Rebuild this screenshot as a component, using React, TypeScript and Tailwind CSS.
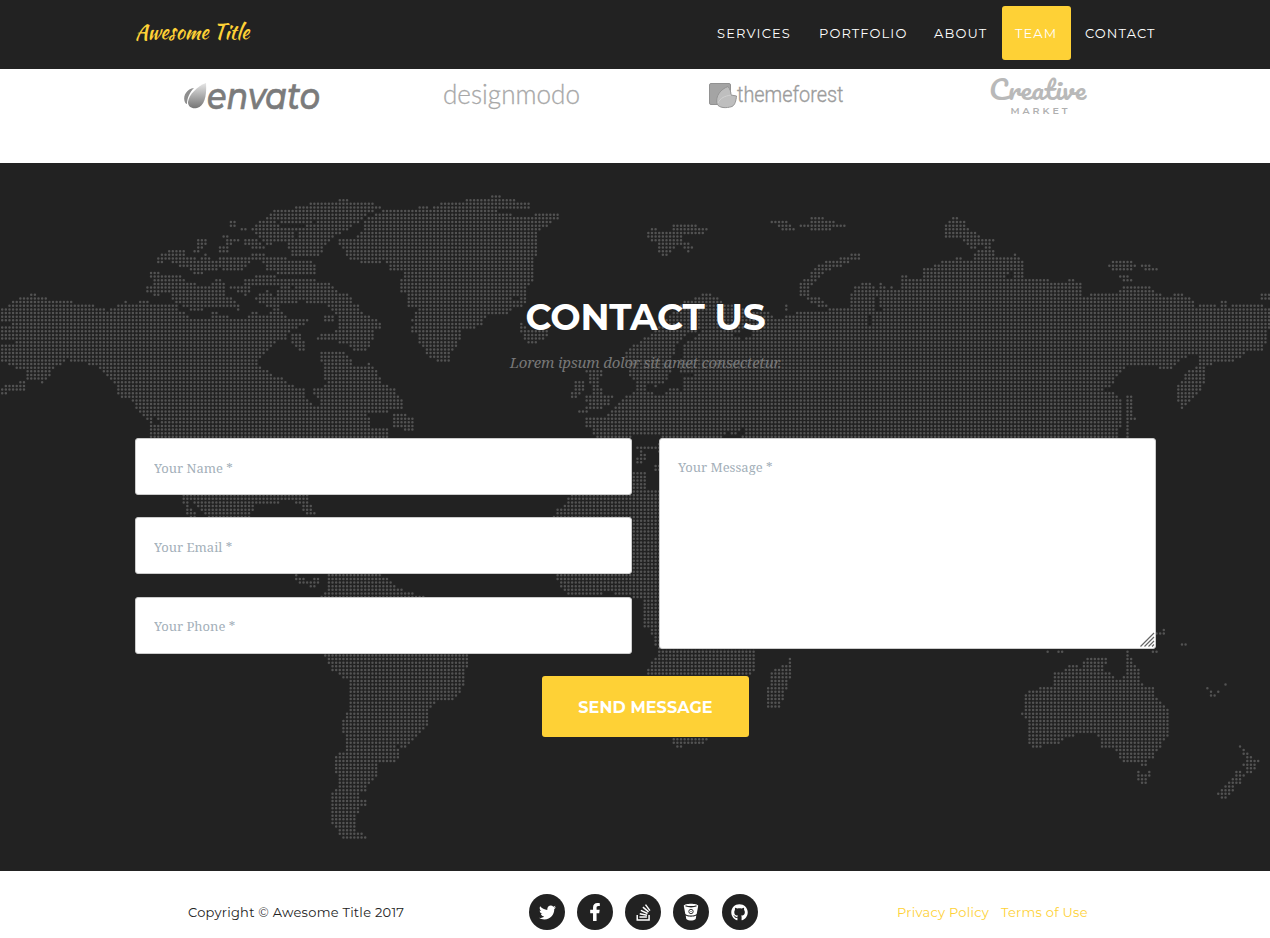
import React from "react";
import { FaTwitter, FaFacebookF, FaStackOverflow, FaGithub } from "react-icons/fa";

type Point = [number, number];
// Outlines are stored in thirds of a pixel, relative to the origin of their map sheet.
type Sheet = { x: number; y: number; outlines: string[] };

const NORTH_AMERICA: Sheet = {
  x: 0,
  y: 180,
  outlines: [
    "0,382 25,382 30,370 55,360 60,350 90,350 95,339 107,339 110,350 140,352 145,362 215,362 220,372 280,374 300,384 325,390 345,378 375,366 400,370 430,362 450,366 500,374 530,376 540,394 560,396 570,412 630,414 640,392 655,392 660,404 680,404 700,414 740,412 750,395 770,395 780,410 800,404 805,390 825,390 850,394 860,410 900,418 925,418 920,432 880,446 865,456 865,475 875,480 830,486 815,500 790,520 778,540 780,560 800,572 815,585 845,595 870,612 900,622 918,630 920,660 945,680 965,670 960,655 940,645 940,625 975,615 980,600 970,590 968,560 962,535 965,508 1020,510 1050,530 1060,555 1080,565 1110,548 1130,570 1145,605 1180,625 1205,655 1215,690 1190,692 1100,702 1115,715 1115,745 1160,745 1165,760 1180,790 455,790 450,740 440,715 415,700 405,670 385,655 350,610 330,605 315,580 290,560 250,546 220,545 205,538 180,555 150,570 150,585 130,610 110,595 80,605 75,630 45,632 10,644 0,644 0,622 40,612 70,600 80,590 85,575 50,570 20,550 0,540 0,495 50,490 45,478 0,480 0,440 40,440 35,428 0,426",
    "350,615 360,615 375,635 380,662 370,655 352,640",
    "1180,700 1210,693 1228,710 1245,720 1247,754 1225,755 1200,740 1180,738",
    "830,297 940,297 960,310 985,308 1010,330 1045,345 1060,365 1080,375 1085,400 1120,415 1145,430 1147,442 1120,446 1125,465 1112,500 1090,514 1060,512 1060,500 1030,495 1010,480 952,480 955,462 1005,460 1010,440 1010,410 995,385 975,375 930,375 915,360 870,372 835,365 830,340 835,320",
    "975,403 1000,403 1000,427 975,427",
    "870,462 910,462 905,485 920,488 920,514 900,514 875,495",
    "450,276 490,280 545,290 560,305 590,312 625,318 645,300 665,300 680,310 678,345 700,360 720,375 720,392 690,384 640,385 570,392 550,378 525,370 515,350 495,335 470,347 438,337 440,318 465,310 452,292",
    "685,316 720,322 740,290 758,290 760,300 755,340 735,345 710,335 690,330",
    "768,288 832,288 828,315 768,320",
    "768,345 800,330 825,350 842,370 840,390 820,392 790,375 768,365",
    "472,238 482,220 500,212 555,208 560,228 600,238 620,220 640,240 668,245 665,265 640,275 580,284 560,265 540,262 510,243 472,248",
    "588,178 624,178 620,195 605,218 582,216 582,205 594,198",
    "690,122 712,122 712,138 690,138",
    "722,144 744,144 744,153 722,153",
    "668,168 720,172 720,190 695,192 680,218 658,218 660,198 680,194",
    "732,180 756,168 780,190 797,195 797,208 785,212 760,208 735,195",
    "658,230 752,230 755,248 720,272 668,272",
    "755,218 800,225 810,233 925,238 948,250 948,282 850,284 800,272 800,248 755,242",
    "765,135 785,120 800,112 815,92 880,84 930,70 1010,66 1020,56 1048,56 1052,66 1110,68 1147,82 1142,90 1105,96 1090,120 1060,135 1020,165 990,175 980,195 965,215 955,235 870,232 865,200 830,188 810,200 780,175 755,150",
  ],
};

const GREENLAND: Sheet = {
  x: 320,
  y: 180,
  outlines: [
    "57,180 100,175 130,150 130,120 180,98 200,88 270,88 300,80 322,80 330,94 345,76 360,68 430,64 440,56 510,56 518,45 548,45 550,56 580,58 600,68 632,68 632,86 600,88 530,92 540,100 630,110 650,100 722,100 722,118 690,130 655,155 648,185 658,215 640,235 645,280 635,305 615,320 622,355 610,380 580,385 560,406 500,405 490,430 460,448 430,450 415,490 395,515 388,545 365,545 340,540 320,520 300,495 290,465 268,450 285,435 268,425 285,400 300,385 265,380 265,350 255,338 243,335 245,275 210,270 200,245 130,250 95,240 80,228 80,215 60,208",
    "600,430 612,430 620,445 640,448 690,455 688,472 660,480 640,492 620,485 605,460 595,445",
    "768,493 778,493 778,512 768,512",
    "792,572 850,570 845,590 835,600 840,620 855,645 878,650 870,670 850,685 800,695 772,698 772,690 800,680 800,665 790,655 820,640 820,620 800,612 805,590",
    "757,600 795,600 790,635 770,655 745,657 750,635 760,625",
  ],
};

const EURASIA: Sheet = {
  x: 620,
  y: 180,
  outlines: [
    "-108,712 -50,712 -30,700 0,665 20,650 42,638 45,600 20,580 20,545 10,525 25,505 60,485 90,465 120,440 190,365 230,352 260,338 268,338 275,352 300,352 305,365 350,375 420,395 450,394 470,415 485,420 510,400 610,393 640,380 690,385 688,345 710,315 735,307 755,308 765,320 762,370 768,395 785,390 770,345 772,310 785,310 800,328 820,318 840,335 840,288 860,288 875,298 905,295 905,265 935,263 945,254 975,242 1010,233 1060,240 1065,215 1090,205 1110,190 1060,205 1045,200 1030,178 975,172 973,140 985,122 1005,112 1015,112 1035,122 1040,142 1065,155 1075,168 1122,178 1112,205 1135,230 1180,225 1188,222 1210,240 1208,293 1260,298 1310,304 1365,298 1385,310 1390,345 1410,350 1415,330 1430,338 1490,338 1510,320 1592,318 1605,335 1640,350 1675,340 1715,353 1722,365 1720,385 1740,374 1795,378 1802,365 1820,362 1830,385 1840,366 1920,374 1955,384 1955,430 1942,465 1932,514 1880,516 1840,547 1790,545 1760,560 1756,610 1730,645 1700,675 1685,688 1672,665 1670,620 1700,580 1730,555 1730,530 1700,528 1660,565 1625,568 1610,555 1520,562 1485,595 1480,612 1455,630 1490,640 1508,660 1505,730 1485,800 -60,800 -85,750 -105,735",
    "1520,640 1538,640 1538,690 1548,715 1527,722 1525,800 1517,800 1518,690 1512,650",
    "1922,340 1960,340 1960,360 1922,360",
    "75,155 90,145 110,148 150,150 155,132 225,132 230,145 270,145 270,152 248,163 195,165 190,180 228,198 212,218 190,205 165,190 160,215 145,229 130,228 110,218 108,185 90,182",
    "445,122 500,122 525,150 497,153 470,138",
    "535,132 570,125 575,112 608,112 612,122 640,122 678,136 675,143 610,152 570,152 565,140 535,140",
    "533,315 545,297 570,290 580,262 610,245 690,228 690,220 720,220 720,240 690,247 650,262 620,275 590,300 565,325 565,345 600,350 605,362 625,372 610,385 560,360 533,338",
    "488,372 500,375 514,385 490,395",
    "1465,255 1475,243 1538,243 1546,260 1538,273 1480,273",
    "1560,254 1592,254 1615,265 1612,272 1575,270",
    "1498,286 1528,286 1538,304 1510,304",
  ],
};

const AFRICA: Sheet = {
  x: 500,
  y: 430,
  outlines: [
    "400,20 478,20 478,72 455,55 432,60 437,90 425,100 400,102 418,75 410,50 400,35",
    "458,102 480,102 480,124 458,124",
    "155,262 175,235 190,225 212,195 396,195 396,126 442,130 442,178 600,180 700,300 768,657 772,715 745,740 690,880 632,925 608,943 550,945 540,953 525,950 515,925 460,745 445,735 445,715 460,690 475,680 468,650 458,640 455,605 425,585 425,510 396,500 205,495 175,460 160,430",
    "862,682 872,682 872,745 850,800 845,834 797,834 797,780 808,765 808,730 830,715 860,700",
  ],
};

const SOUTH_AMERICA: Sheet = {
  x: 130,
  y: 480,
  outlines: [
    "150,30 540,30 540,75 562,100 562,110 545,110 518,95 512,70 450,63 440,72 375,72 360,120 235,120 200,80 190,60 175,65 190,95 212,120 190,120 170,105 168,75 155,66",
    "483,280 515,290 530,305 550,303 550,290 572,292 572,310 560,322 540,320 510,310",
    "595,280 640,280 745,280 780,300 800,325 845,338 885,352 1000,400 1019,525 1010,570 1005,600 988,645 965,662 920,665 900,690 898,725 880,755 830,803 812,803 800,795 812,825 790,848 748,852 745,878 735,900 712,912 712,938 690,938 695,958 714,958 714,978 690,980 685,1000 672,1010 684,1055 714,1067 714,1078 640,1078 618,1050 605,1030 605,938 620,928 617,825 640,815 650,770 640,765 638,725 650,700 662,670 660,605 605,572 595,545 570,520 500,440 570,350 590,330",
  ],
};

const OCEANIA: Sheet = {
  x: 980,
  y: 600,
  outlines: [
    "132,283 155,270 190,258 218,256 218,216 245,215 265,193 285,193 300,205 315,172 383,172 372,210 400,228 415,237 430,228 438,210 438,150 447,150 450,168 460,190 480,205 482,235 495,260 522,265 525,285 545,305 558,320 568,337 567,400 545,432 530,460 523,477 502,480 502,498 484,498 480,480 470,488 440,488 418,477 405,450 385,442 360,442 362,415 340,400 280,400 280,410 250,412 240,434 185,434 182,442 155,442 143,430 145,365 132,355 122,345 122,338 133,335",
    "470,510 482,520 502,522 505,510 514,510 512,530 500,552 484,552 470,540",
    "776,433 795,445 805,462 838,480 838,486 820,518 798,518 800,500 787,493 798,480 788,462",
    "765,510 785,510 797,524 785,545 765,560 760,575 740,597 722,595 710,580 735,555 750,540 768,530",
  ],
};

const WATER: Sheet[] = [
  {
    x: 0,
    y: 180,
    outlines: [
      "818,112 845,128 918,132 918,143 845,144",
      "880,152 896,160 896,176 880,172",
      "600,212 612,212 612,232 600,228",
      "870,317 886,317 886,328 870,328",
      "820,190 860,190 858,216 830,214",
      "938,120 952,120 952,131 938,131",
      "455,708 470,708 482,730 460,730",
    ],
  },
  {
    x: 620,
    y: 180,
    outlines: [
      "165,492 205,463 240,452 235,465 200,485 185,500 188,525 180,545 180,575 225,585 225,590 190,592 185,630 150,625 130,643 85,638 75,615 110,618 140,605 155,570 160,530",
      "340,455 400,452 395,466 365,478 340,466",
      "296,800 305,765 330,758 335,770 350,765 370,745 372,760 350,800",
      "35,800 35,768 120,768 115,800",
      "1165,275 1185,280 1175,295 1160,292",
      "740,425 755,395 760,440 745,440",
    ],
  },
  { x: 320, y: 180, outlines: ["582,345 603,345 603,360 582,362"] },
  { x: 500, y: 430, outlines: ["310,488 340,488 335,497 315,497"] },
];

const ISLETS: Point[] = [
  [1046.7, 651.7], [1058, 651.7], [1062, 651.7], [1157.3, 633.3], [1160.7, 633.3], [1164, 630], [1164, 633.3],
  [1181.7, 644], [1185.7, 644], [1153.7, 651.7], [1157, 651.7], [1207.3, 688], [1211, 691.7], [1211, 695.3],
  [1215, 695.3], [1218.7, 691.7], [1226, 684.3],
];

const PITCH_X = 3.63;
const PITCH_Y = 3.642;
const START_X = 2.2;
const START_Y = 196.5;

function trace(sheet: Sheet): Point[][] {
  return sheet.outlines.map((line) =>
    line.split(" ").map((pair) => {
      const [x, y] = pair.split(",").map(Number);
      return [sheet.x + x / 3, sheet.y + y / 3] as Point;
    })
  );
}

function inside(px: number, py: number, ring: Point[]) {
  let hit = false;
  for (let i = 0, j = ring.length - 1; i < ring.length; j = i++) {
    const [ax, ay] = ring[i];
    const [bx, by] = ring[j];
    if (ay > py !== by > py && px < ((bx - ax) * (py - ay)) / (by - ay) + ax) hit = !hit;
  }
  return hit;
}

function buildDots() {
  const land = [NORTH_AMERICA, GREENLAND, EURASIA, AFRICA, SOUTH_AMERICA, OCEANIA].flatMap(trace);
  const water = WATER.flatMap(trace);
  const dots: string[] = [];
  const put = (x: number, y: number) => dots.push(`M${x.toFixed(2)} ${(y - 163).toFixed(2)}h.01`);
  for (let row = 0; row < 182; row++) {
    const y = START_Y + row * PITCH_Y;
    for (let col = 0; col < 351; col++) {
      const x = START_X + col * PITCH_X;
      if (land.some((r) => inside(x, y, r)) && !water.some((r) => inside(x, y, r))) put(x, y);
    }
  }
  for (const [x, y] of ISLETS) {
    put(
      START_X + Math.round((x - START_X) / PITCH_X) * PITCH_X,
      START_Y + Math.round((y - START_Y) / PITCH_Y) * PITCH_Y
    );
  }
  return dots.join("");
}

const DOTS = buildDots();

function WorldMap() {
  return (
    <svg className="absolute inset-0 h-[708px] w-[1270px]" viewBox="0 0 1270 708" aria-hidden="true">
      <path d={DOTS} fill="none" stroke="#535353" strokeWidth="2.5" strokeLinecap="round" />
    </svg>
  );
}

function EnvatoLogo() {
  return (
    <svg className="h-[52px] w-[142px] overflow-visible" viewBox="182 70 142 52">
      <defs>
        <linearGradient id="leaf" x1="0" y1="0" x2="0" y2="1">
          <stop offset="0" stopColor="#e6e6e6" />
          <stop offset="1" stopColor="#757575" />
        </linearGradient>
      </defs>
      <path d="M206 83C198 86 189 94 188 102C188 107 192 109 197 108C204 106 207 97 206 83Z" fill="url(#leaf)" />
      <path d="M194 88C187 89 183 95 184.500 101C185 103 186 104 187 104C187 98 190 92 194 88Z" fill="#8e8e8e" />
      <text x="207" y="108.500" fontFamily="Montserrat, sans-serif" fontSize="37" fontWeight="500" fontStyle="italic" fill="#7b7b7b" stroke="#7b7b7b" strokeWidth=".7" textLength="113" lengthAdjust="spacingAndGlyphs">envato</text>
    </svg>
  );
}

function DesignmodoLogo() {
  return (
    <svg className="h-[48px] w-[142px] overflow-visible" viewBox="442 70 142 48">
      <text x="443" y="103.500" fontFamily="Lato, sans-serif" fontSize="28" fontWeight="300" fill="#a8a8a8" stroke="#a8a8a8" strokeWidth=".3" textLength="137" lengthAdjust="spacingAndGlyphs">designmodo</text>
    </svg>
  );
}

function ThemeforestLogo() {
  return (
    <svg className="h-[48px] w-[142px] overflow-visible" viewBox="707 70 142 48">
      <rect x="709.500" y="83.500" width="21" height="21" rx="1.500" fill="#a4a4a4" stroke="#929292" />
      <path d="M717 104C715 96 721 89 728 86.500C730 89 731 92 731 95L736.500 96C736 101 735 105 732 106.500C726 108.500 719 108 717 104Z" fill="#bebebe" stroke="#959595" />
      <path d="M718 103C720 98 725 96 731 95" fill="none" stroke="#d0d0d0" />
      <text x="737" y="102" fontFamily="Roboto, sans-serif" fontSize="22" fontWeight="300" fill="#9c9c9c" stroke="#9c9c9c" strokeWidth=".35" textLength="106.500" lengthAdjust="spacingAndGlyphs">themeforest</text>
    </svg>
  );
}

function CreativeLogo() {
  return (
    <svg className="h-[54px] w-[108px] overflow-visible" viewBox="986 66 108 54">
      <text x="989" y="99.500" fontFamily="Pacifico, 'Kaushan Script', cursive" fontSize="25" fill="#b9b9b9" textLength="97" lengthAdjust="spacingAndGlyphs">Creative</text>
      <text x="1010.500" y="113.700" fontFamily="Montserrat, sans-serif" fontSize="9.500" fontWeight="600" fill="#b0b0b0" textLength="57">MARKET</text>
    </svg>
  );
}

function BucketIcon() {
  return (
    <svg className="h-[18px] w-[16px]" viewBox="0 0 16 18" aria-hidden="true">
      <path d="M.8 2.800C1.500 0 14.500 0 15.200 2.800L13.700 11C11 13 5 13 2.300 11Z" fill="white" />
      <path d="M2.700 12.600C5.500 14.200 10.500 14.200 13.300 12.600L12.700 16C10 18 6 18 3.300 16Z" fill="white" />
      <path d="M3 3C5 4 11 4 13 3" fill="none" stroke="#222" strokeWidth="1.300" strokeLinecap="round" />
      <circle cx="8" cy="8.500" r="2.200" fill="none" stroke="#222" strokeWidth=".9" />
      <circle cx="8" cy="8.500" r=".6" fill="#222" />
    </svg>
  );
}

const NAV = [
  { label: "SERVICES", box: "w-[102px] tracking-[1.15px]" },
  { label: "PORTFOLIO", box: "w-[115px] tracking-[1.1px]" },
  { label: "ABOUT", box: "w-[81px] tracking-[1.15px]" },
  { label: "TEAM", box: "w-[69px] mr-[1px] bg-[#fed136] tracking-[1.1px]" },
  { label: "CONTACT", box: "w-[97px] tracking-[1.1px]" },
];

const FIELD =
  "block w-full rounded-[3px] border border-[#cccccc] bg-white pl-[18px] font-['Roboto_Slab','Noto_Serif','DejaVu_Serif_Condensed','DejaVu_Serif',serif] text-[13px] text-[#555555] outline-none placeholder:text-[#a3afb9] placeholder:opacity-100";

const SOCIAL = [
  { name: "Twitter", icon: <FaTwitter className="size-[17px]" /> },
  { name: "Facebook", icon: <FaFacebookF className="size-[18px]" /> },
  { name: "Stack Overflow", icon: <FaStackOverflow className="size-[19px]" /> },
  { name: "Bitbucket", icon: <BucketIcon /> },
  { name: "GitHub", icon: <FaGithub className="size-[17px]" /> },
];

export default function App() {
  return (
    <div className="flex h-[938px] w-[1270px] flex-col overflow-hidden bg-white font-['Montserrat','Inter',sans-serif]">
      <header className="flex h-[69px] shrink-0 items-start justify-between bg-[#222222] pr-[101px] pl-[135px]">
        <a className="mt-[15px] font-['Kaushan_Script',cursive] text-[20.4px] leading-[34px] font-normal text-[#fed136]">
          Awesome Title
        </a>
        <nav className="mt-[6px] flex">
          {NAV.map((item) => (
            <a
              key={item.label}
              className={`flex h-[54px] items-center rounded-[3px] pt-[2px] pl-[13px] text-[13px] whitespace-nowrap text-white ${item.box}`}
            >
              {item.label}
            </a>
          ))}
        </nav>
      </header>

      <section className="flex h-[94px] shrink-0 items-start pl-[182px]">
        <div className="w-[260px] pt-[1px]"><EnvatoLogo /></div>
        <div className="w-[265px] pt-[1px]"><DesignmodoLogo /></div>
        <div className="w-[279px] pt-[1px]"><ThemeforestLogo /></div>
        <div className="-mt-[3px]"><CreativeLogo /></div>
      </section>

      <section className="relative h-[708px] shrink-0 bg-[#222222]">
        <WorldMap />
        <div className="relative flex flex-col items-center pl-[21px]">
          <h2 className="mt-[131px] text-[36px] leading-[46px] font-bold tracking-[-0.2px] text-white">CONTACT US</h2>
          <p className="mt-[11px] font-['Droid_Serif','Noto_Serif','DejaVu_Serif_Condensed','DejaVu_Serif',serif] text-[15px] leading-[22px] tracking-[-0.2px] text-[#777777] italic">
            Lorem ipsum dolor sit amet consectetur.
          </p>
        </div>
        <form className="relative mt-[65px] flex flex-col items-center pl-[21px]">
          <div className="flex w-[1021px] gap-[27px]">
            <div className="flex w-[497px] flex-col">
              <input className={`h-[57px] pt-[2px] ${FIELD}`} placeholder="Your Name *" />
              <input className={`mt-[22px] h-[57px] pt-[2px] ${FIELD}`} placeholder="Your Email *" />
              <input className={`mt-[23px] h-[57px] ${FIELD}`} placeholder="Your Phone *" />
            </div>
            <div className="relative h-[211px] w-[497px]">
              <textarea className={`h-[211px] resize-none pt-[19px] ${FIELD}`} placeholder="Your Message *" />
              <svg className="absolute right-[1px] bottom-[2px] size-[15px]" viewBox="0 0 15 15" aria-hidden="true">
                <path d="M.5 14.500L14 1M4.500 14.500L14 5M8.500 14.500L14 9M12 14.500L14 12.500" stroke="#666" strokeWidth="1.200" />
              </svg>
            </div>
          </div>
          <button
            type="button"
            className="mt-[22px] h-[61px] w-[207px] rounded-[3px] bg-[#fed136] pt-[2px] text-[16px] font-bold tracking-[0.1px] text-white"
          >
            SEND MESSAGE
          </button>
        </form>
      </section>

      <footer className="flex h-[67px] shrink-0 items-start pt-[23px] text-[13px] leading-[36px]">
        <span className="w-[529px] pl-[188px] tracking-[0.26px] whitespace-nowrap text-[#222222]">Copyright © Awesome Title 2017</span>
        <div className="flex w-[368px] gap-[12.150px]">
          {SOCIAL.map((s) => (
            <a key={s.name} aria-label={s.name} className="flex size-[36px] items-center justify-center rounded-full bg-[#222222] text-white">
              {s.icon}
            </a>
          ))}
        </div>
        <div className="flex text-[#fed136]">
          <a className="w-[104px] tracking-[0.26px]">Privacy Policy</a>
          <a className="tracking-[0.26px] whitespace-nowrap">Terms of Use</a>
        </div>
      </footer>
    </div>
  );
}
